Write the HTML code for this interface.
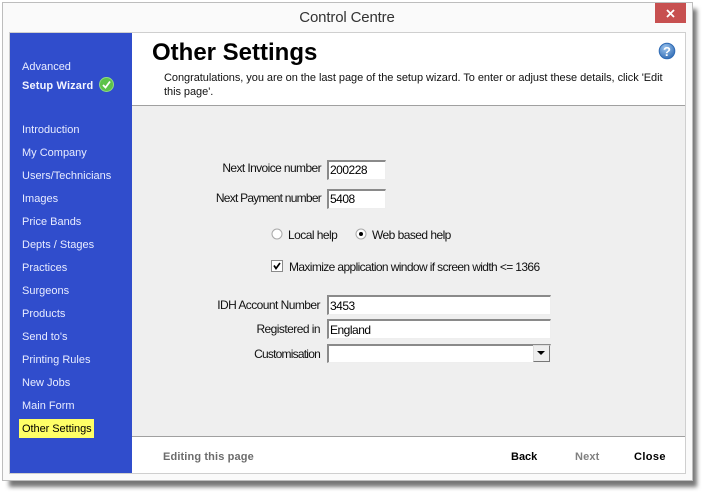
<!DOCTYPE html>
<html><head><meta charset="utf-8">
<style>
html,body{margin:0;padding:0;background:#fff;}
body{width:707px;height:495px;position:relative;overflow:hidden;font-family:"Liberation Sans",sans-serif;font-size:12px;color:#000;}
div,span{position:absolute;white-space:nowrap;}
.nav{left:22px;color:#e8ecff;font-size:11px;line-height:14px;}
.lbl{font-size:12px;line-height:14px;text-align:right;color:#111;letter-spacing:-0.55px;}
.inp{background:#fff;border:1px solid #eee;border-top:2px solid #8a8a8a;border-left:2px solid #8a8a8a;box-sizing:border-box;font-size:12px;line-height:16px;padding-top:1px;padding-left:1px;letter-spacing:-0.5px;}
.t{font-size:12px;line-height:14px;color:#111;letter-spacing:-0.55px;}
.btn{font-weight:bold;font-size:11px;line-height:14px;letter-spacing:0.13px;}
</style></head><body>
<div style="left:9px;top:9px;width:688px;height:478px;background:#777;filter:blur(2px);"></div>
<div style="left:2px;top:2px;width:691px;height:479px;background:#fafafa;border:1px solid #bdbdbd;box-sizing:border-box;"></div>
<div style="left:1px;top:9px;width:692px;text-align:center;font-size:15px;line-height:18px;color:#333;letter-spacing:-0.15px;">Control Centre</div>
<div style="left:655px;top:3px;width:31px;height:20px;background:#c75050;"></div>
<svg style="position:absolute;left:666px;top:9px" width="10" height="9"><path d="M1 1L8 8M8 1L1 8" stroke="#fff" stroke-width="1.8" fill="none"/></svg>
<div style="left:9px;top:32px;width:677px;height:442px;background:#fff;border:1px solid #cfcfcf;box-sizing:border-box;"></div>
<div style="left:10px;top:33px;width:122px;height:440px;background:#304dcc;"></div>
<div style="left:132px;top:105px;width:553px;height:332px;background:#efefef;border-top:1px solid #a0a0a0;border-bottom:1px solid #a0a0a0;box-sizing:border-box;"></div>

<div class="nav" style="top:60px;">Advanced</div>
<div class="nav" style="top:79px;font-weight:bold;color:#f2f4ff;letter-spacing:0.15px;">Setup Wizard</div>
<svg style="position:absolute;left:99px;top:77px" width="15" height="15"><circle cx="7.5" cy="7.5" r="7" fill="#5cc24a"/><circle cx="7.5" cy="7.5" r="7" fill="none" stroke="#8fdc80" stroke-width="1"/><path d="M4 8L6.5 10.5L11 4.5" stroke="#fff" stroke-width="1.8" fill="none"/></svg>
<div class="nav" style="top:123px;">Introduction</div>
<div class="nav" style="top:146px;">My Company</div>
<div class="nav" style="top:169px;">Users/Technicians</div>
<div class="nav" style="top:192px;">Images</div>
<div class="nav" style="top:215px;">Price Bands</div>
<div class="nav" style="top:238px;">Depts / Stages</div>
<div class="nav" style="top:261px;">Practices</div>
<div class="nav" style="top:284px;">Surgeons</div>
<div class="nav" style="top:307px;">Products</div>
<div class="nav" style="top:330px;">Send to's</div>
<div class="nav" style="top:353px;">Printing Rules</div>
<div class="nav" style="top:376px;">New Jobs</div>
<div class="nav" style="top:399px;">Main Form</div>
<div style="left:19px;top:419px;width:75px;height:19px;background:#ffff66;"></div>
<div class="nav" style="top:422px;color:#000;letter-spacing:-0.05px;">Other Settings</div>

<div style="left:152px;top:38px;font-size:24px;line-height:30px;font-weight:bold;">Other Settings</div>
<div style="left:164px;top:71px;font-size:11px;line-height:14px;color:#111;letter-spacing:-0.05px;">Congratulations, you are on the last page of the setup wizard. To enter or adjust these details, click 'Edit</div>
<div style="left:164px;top:85px;font-size:11px;line-height:14px;color:#111;letter-spacing:-0.05px;">this page'.</div>
<svg style="position:absolute;left:658px;top:42px" width="18" height="18"><defs><radialGradient id="g" cx="40%" cy="30%" r="80%"><stop offset="0" stop-color="#9cc4ee"/><stop offset="1" stop-color="#2a66b0"/></radialGradient></defs><circle cx="9" cy="9" r="7.8" fill="url(#g)" stroke="#2f6bb5"/><text x="9" y="14" text-anchor="middle" font-family="Liberation Sans" font-weight="bold" font-size="13" fill="#fff">?</text></svg>

<div class="lbl" style="left:180px;width:141px;top:161px;letter-spacing:-0.6px;">Next Invoice number</div>
<div class="inp" style="left:327px;top:160px;width:59px;height:20px;padding-top:0;">200228</div>
<div class="lbl" style="left:180px;width:141px;top:191px;letter-spacing:-0.75px;">Next Payment number</div>
<div class="inp" style="left:327px;top:189px;width:59px;height:20px;padding-top:0;">5408</div>

<svg style="position:absolute;left:271px;top:228px" width="12" height="12"><circle cx="6" cy="6" r="5" fill="#fff" stroke="#a8a8a8"/></svg>
<div class="t" style="left:288px;top:228px;">Local help</div>
<svg style="position:absolute;left:355px;top:228px" width="12" height="12"><circle cx="6" cy="6" r="5" fill="#fff" stroke="#a8a8a8"/><circle cx="6" cy="6" r="2" fill="#000"/></svg>
<div class="t" style="left:372px;top:228px;">Web based help</div>

<div style="left:271px;top:260px;width:12px;height:12px;background:#fff;border:1px solid #8a8a8a;box-sizing:border-box;"></div>
<svg style="position:absolute;left:271px;top:260px" width="12" height="12"><path d="M3 5.5L5 8.5L9 3" stroke="#000" stroke-width="1.7" fill="none"/></svg>
<div class="t" style="left:289px;top:260px;letter-spacing:-0.62px;">Maximize application window if screen width &lt;= 1366</div>

<div class="lbl" style="left:180px;width:140px;top:298px;">IDH Account Number</div>
<div class="inp" style="left:327px;top:295px;width:224px;height:20px;">3453</div>
<div class="lbl" style="left:180px;width:140px;top:322px;">Registered in</div>
<div class="inp" style="left:327px;top:319px;width:224px;height:20px;">England</div>
<div class="lbl" style="left:180px;width:140px;top:347px;letter-spacing:-0.78px;">Customisation</div>
<div class="inp" style="left:327px;top:344px;width:224px;height:19px;"></div>
<div style="left:533px;top:345px;width:17px;height:17px;background:#eee;border:1px solid #777;border-top-color:#ddd;border-left-color:#ddd;box-sizing:border-box;"></div>
<svg style="position:absolute;left:537px;top:351px" width="9" height="5"><path d="M0 0H8L4 4Z" fill="#000"/></svg>

<div class="btn" style="left:163px;top:450px;color:#6c6c6c;">Editing this page</div>
<div class="btn" style="left:511px;top:450px;letter-spacing:0;">Back</div>
<div class="btn" style="left:575px;top:450px;color:#808080;">Next</div>
<div class="btn" style="left:634px;top:450px;letter-spacing:0.4px;">Close</div>
</body></html>
